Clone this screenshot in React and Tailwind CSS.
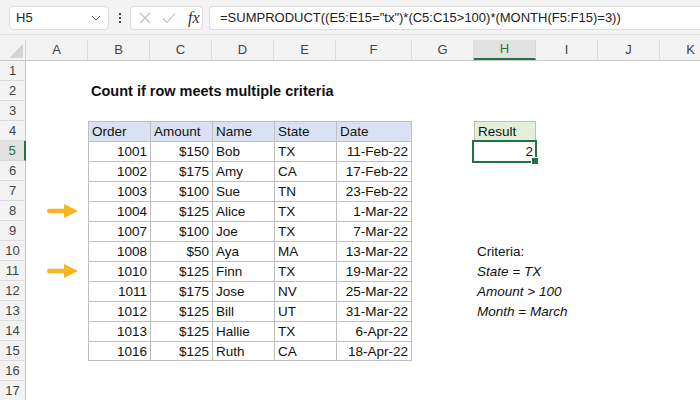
import React from "react";

const COLS = [62, 62, 62, 62, 62, 76, 62, 62, 62, 62, 62];
const LETTERS = ["A", "B", "C", "D", "E", "F", "G", "H", "I", "J", "K"];

const DATA = [
  ["1001", "$150", "Bob", "TX", "11-Feb-22"],
  ["1002", "$175", "Amy", "CA", "17-Feb-22"],
  ["1003", "$100", "Sue", "TN", "23-Feb-22"],
  ["1004", "$125", "Alice", "TX", "1-Mar-22"],
  ["1007", "$100", "Joe", "TX", "7-Mar-22"],
  ["1008", "$50", "Aya", "MA", "13-Mar-22"],
  ["1010", "$125", "Finn", "TX", "19-Mar-22"],
  ["1011", "$175", "Jose", "NV", "25-Mar-22"],
  ["1012", "$125", "Bill", "UT", "31-Mar-22"],
  ["1013", "$125", "Hallie", "TX", "6-Apr-22"],
  ["1016", "$125", "Ruth", "CA", "18-Apr-22"],
];

const HEAD = ["Order", "Amount", "Name", "State", "Date"];
const ALIGN = ["right", "right", "left", "left", "right"];

function Arrow() {
  return (
    <svg width="32" height="16" viewBox="0 0 32 16" className="ml-[20px]">
      <rect x="1" y="5.7" width="19" height="4.6" rx="2.3" fill="#f5b422" />
      <polygon points="18,1 32,8 18,15" fill="#f5b422" />
    </svg>
  );
}

function cellContent(r, c) {
  if (r === 2 && c === 1)
    return { text: "Count if row meets multiple criteria", bold: true, align: "left", overflow: true };
  if ((r === 8 || r === 11) && c === 0) return { arrow: true };
  if (c >= 1 && c <= 5) {
    if (r === 4) return { text: HEAD[c - 1], align: "left", table: true, head: true };
    if (r >= 5 && r <= 15) return { text: DATA[r - 5][c - 1], align: ALIGN[c - 1], table: true };
  }
  if (c === 7) {
    if (r === 4) return { text: "Result", align: "left", result: true };
    if (r === 5) return { text: "2", align: "right", selected: true };
    if (r === 10) return { text: "Criteria:", align: "left", overflow: true };
    if (r === 11) return { text: "State = TX", align: "left", italic: true, overflow: true };
    if (r === 12) return { text: "Amount > 100", align: "left", italic: true, overflow: true };
    if (r === 13) return { text: "Month = March", align: "left", italic: true, overflow: true };
  }
  return null;
}

function Cell({ r, c }) {
  const w = COLS[c];
  const info = cellContent(r, c);
  if (!info) return <div className="shrink-0 h-[20px]" style={{ width: w }} />;
  if (info.arrow)
    return (
      <div className="shrink-0 h-[20px] flex items-center" style={{ width: w }}>
        <Arrow />
      </div>
    );

  let cls = "shrink-0 h-[20px] flex items-center relative pt-[1px] ";
  if (info.table) {
    cls += "border-l border-t border-[#bfbfbf] ";
    if (c === 5) cls += "border-r ";
    if (r === 15) cls += "border-b ";
    if (info.head) cls += "bg-[#d9e1f2] ";
  }
  if (info.result) cls += "border border-[#bfbfbf] bg-[#e2efda] ";
  cls += info.align === "right" ? "justify-end pr-[3px] " : "justify-start pl-[3px] ";
  if (info.overflow) cls += "whitespace-nowrap overflow-visible z-10 ";

  let tcls = "leading-none text-[#111] ";
  tcls += info.bold ? "font-bold text-[14.5px] " : "text-[13.5px] ";
  if (info.italic) tcls += "italic ";

  return (
    <div className={cls} style={{ width: w }}>
      <span className={tcls}>{info.text}</span>
      {info.selected && (
        <>
          <div className="absolute left-[-2px] top-[-1px] right-[-1px] bottom-[-2px] border-2 border-[#217346] pointer-events-none" />
          <div className="absolute right-[-3px] bottom-[-4px] w-[6px] h-[6px] bg-[#217346] border border-white box-content" />
        </>
      )}
    </div>
  );
}

function Row({ r }) {
  const sel = r === 5;
  return (
    <div className="flex h-[20px]">
      <div
        className={
          sel
            ? "w-[26px] shrink-0 h-[20px] flex items-center justify-center pt-[1px] bg-[#e1e1e1] border-b border-[#d6d6d6] border-r-2 border-r-[#217346] text-[13px] text-[#217346]"
            : "w-[26px] shrink-0 h-[20px] flex items-center justify-center pt-[1px] bg-[#f3f3f3] border-b border-[#dcdcdc] border-r border-r-[#c8c8c8] text-[13px] text-[#444]"
        }
      >
        {r}
      </div>
      {COLS.map((_, c) => (
        <Cell key={c} r={r} c={c} />
      ))}
    </div>
  );
}

export default function App() {
  const rows = Array.from({ length: 17 }, (_, i) => i + 1);
  return (
    <div
      className="w-[700px] h-[400px] overflow-hidden bg-white"
      style={{ fontFamily: '"Liberation Sans", Arial, sans-serif' }}
    >
      {/* Top bar */}
      <div className="h-[35px] bg-[#f3f3f3] border-b border-[#e2e2e2] flex items-center pl-[9px] pt-[1px]">
        <div className="w-[100px] h-[24px] bg-white border border-[#dcdcdc] rounded-[4px] flex items-center justify-between pl-[6px] pr-[7px]">
          <span className="text-[13px] text-[#222]">H5</span>
          <svg width="10" height="6" viewBox="0 0 10 6">
            <path d="M1 1 L5 5 L9 1" fill="none" stroke="#666" strokeWidth="1" />
          </svg>
        </div>
        <div className="w-[21px] h-[24px] flex flex-col items-center justify-center gap-[2px]">
          <div className="w-[2px] h-[2px] bg-[#444]" />
          <div className="w-[2px] h-[2px] bg-[#444]" />
          <div className="w-[2px] h-[2px] bg-[#444]" />
        </div>
        <div className="w-[73px] h-[24px] bg-white border border-[#dcdcdc] rounded-[4px] flex items-center pl-[8px]">
          <svg width="12" height="12" viewBox="0 0 12 12">
            <path d="M1 1 L11 11 M11 1 L1 11" stroke="#bdbdbd" strokeWidth="1.1" />
          </svg>
          <svg width="14" height="12" viewBox="0 0 14 12" className="ml-[11px]">
            <path d="M1 6.5 L5 10.5 L13 1.5" fill="none" stroke="#bdbdbd" strokeWidth="1.1" />
          </svg>
          <span
            className="ml-[12px] text-[16px] italic text-[#333] leading-none"
            style={{ fontFamily: '"Liberation Serif", "Times New Roman", serif' }}
          >
            fx
          </span>
        </div>
        <div className="ml-[6px] flex-1 h-[24px] bg-white border border-[#dcdcdc] rounded-l-[4px] border-r-0 flex items-center pl-[10px]">
          <span className="text-[13px] text-[#222] whitespace-nowrap">
            =SUMPRODUCT((E5:E15="tx")*(C5:C15&gt;100)*(MONTH(F5:F15)=3))
          </span>
        </div>
      </div>

      {/* Column headers */}
      <div className="bg-[#f3f3f3]">
        <div className="h-[5px]" />
        <div className="flex h-[21px] border-b border-[#c8c8c8]">
          <div className="w-[26px] shrink-0 relative border-r border-[#d4d4d4]">
            <svg width="14" height="14" viewBox="0 0 14 14" className="absolute right-[2px] bottom-[2px]">
              <polygon points="14,0 14,14 0,14" fill="#d4d4d4" />
            </svg>
          </div>
          {COLS.map((w, c) => (
            <div
              key={c}
              style={{ width: w }}
              className={
                c === 7
                  ? "shrink-0 flex items-center justify-center bg-[#e1e1e1] border-r border-[#d4d4d4] border-b-2 border-b-[#217346] text-[13px] text-[#217346]"
                  : "shrink-0 flex items-center justify-center border-r border-[#dcdcdc] text-[13px] text-[#444]"
              }
            >
              {LETTERS[c]}
            </div>
          ))}
        </div>
      </div>

      {/* Rows */}
      <div>
        {rows.map((r) => (
          <Row key={r} r={r} />
        ))}
      </div>
    </div>
  );
}
